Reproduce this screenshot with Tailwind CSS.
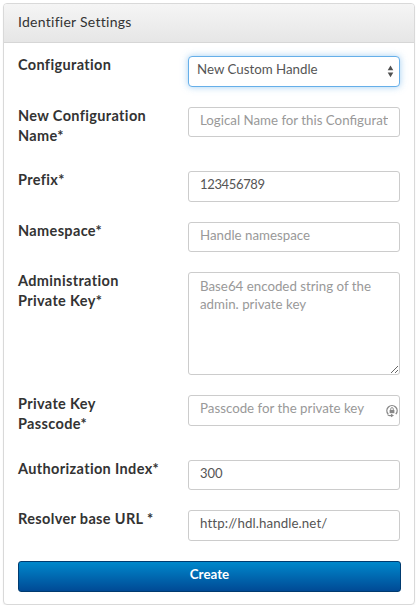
<!DOCTYPE html>
<html lang="en">
<head>
<meta charset="utf-8">
<title>Identifier Settings</title>
<script src="https://cdn.jsdelivr.net/npm/@tailwindcss/browser@4"></script>
</head>
<body class="bg-white pl-[3px] pt-[3px] font-['Lato',sans-serif] text-[#333]">
<section class="h-[602px] w-[412px] rounded-[4px] border border-[#d9d9d9] bg-white shadow-[0_1px_2px_rgba(0,0,0,0.05)]">
  <h1 class="flex h-[39px] items-center rounded-t-[3px] border-b border-[#d6d6d6] bg-gradient-to-b from-[#f5f5f5] to-[#e6e6e6] pl-[14px] text-[14px] leading-[20px] tracking-[0.27px]"><span class="-mt-[3px]">Identifier Settings</span></h1>
  <form class="px-[14px] pt-[13px]">
    <div class="grid grid-cols-[170px_212px] grid-rows-[51px_64px_51px_50px_123px_65px_50px_51px] items-start text-[14.5px] leading-[20px]">
      <label class="-mt-px font-bold tracking-[0.35px]">Configuration</label>
      <div class="relative">
        <select class="block h-[31px] w-[212px] appearance-none rounded-[4px] border border-[#66afe9] bg-white pb-[5px] pl-[8px] text-[13.3px] leading-[18px] text-[#555] shadow-[0_0_7px_rgba(102,175,233,0.6)] outline-none"><option>New Custom Handle</option></select>
        <svg class="pointer-events-none absolute left-[199px] top-[9px]" width="7" height="13" viewBox="0 0 7 13" fill="#505050"><path d="M3.5 .5L6.3 5.3H.7zM3.5 12.3L6.3 7.5H.7z"/></svg>
      </div>
      <label class="-mt-px font-bold tracking-[0.35px]">New Configuration<br>Name*</label>
      <input class="h-[30px] w-[212px] rounded-[3px] border border-[#ccc] px-[11px] pb-[5px] text-[13.3px] placeholder:text-[#999]" placeholder="Logical Name for this Configuration">
      <label class="-mt-px font-bold tracking-[0.35px]">Prefix*</label>
      <input class="h-[31px] w-[212px] rounded-[3px] border border-[#ccc] px-[11px] pb-[6px] text-[13px] tracking-[-0.35px] text-[#555]" value="123456789">
      <label class="-mt-px font-bold tracking-[0.35px]">Namespace*</label>
      <input class="h-[30px] w-[212px] rounded-[3px] border border-[#ccc] px-[11px] pb-[5px] text-[13.3px] placeholder:text-[#999]" placeholder="Handle namespace">
      <label class="-mt-px font-bold tracking-[0.35px]">Administration<br>Private Key*</label>
      <textarea class="h-[103px] w-[212px] rounded-[3px] border border-[#ccc] px-[11px] pt-[4px] text-[13.3px] leading-[18px] placeholder:text-[#999]" placeholder="Base64 encoded string of the admin. private key"></textarea>
      <label class="-mt-px font-bold tracking-[0.35px]">Private Key<br>Passcode*</label>
      <div class="relative">
        <input class="block h-[31px] w-[212px] rounded-[3px] border border-[#ccc] px-[11px] pb-[6px] text-[13.3px] placeholder:text-[#999]" placeholder="Passcode for the private key">
        <svg class="absolute left-[197px] top-[9px]" width="14" height="14" viewBox="0 0 14 14"><path d="M3.2 10.1A5.1 5.1 0 1 1 10.8 10.1" fill="none" stroke="#888" stroke-width="1.4"/><path d="M2.6 10.6Q4.5 12.2 6 11.4" fill="none" stroke="#888" stroke-width="1.2"/><path d="M6 9.7L9 11.4 6 13.2z" fill="#888"/><path d="M4.6 6h4.8v3.2H4.6z" fill="#888"/><path d="M5.7 6V4.9a1.3 1.3 0 0 1 2.6 0V6" fill="none" stroke="#888" stroke-width=".9"/></svg>
      </div>
      <label class="-mt-px font-bold tracking-[0.35px]">Authorization Index*</label>
      <input class="h-[30px] w-[212px] rounded-[3px] border border-[#ccc] px-[11px] pb-[5px] text-[13px] text-[#555]" value="300">
      <label class="-mt-px font-bold tracking-[0.35px]">Resolver base URL *</label>
      <input class="h-[31px] w-[212px] rounded-[3px] border border-[#ccc] px-[11px] pb-[6px] text-[13.3px] tracking-[0.1px] text-[#555]" value="http://hdl.handle.net/">
    </div>
    <button type="button" class="block h-[31px] w-[383px] rounded-[3px] border border-[#003b70] bg-gradient-to-b from-[#0088cc] to-[#004a95] pb-[5px] text-[13.3px] font-bold leading-[18px] text-white">Create</button>
  </form>
</section>
</body>
</html>
